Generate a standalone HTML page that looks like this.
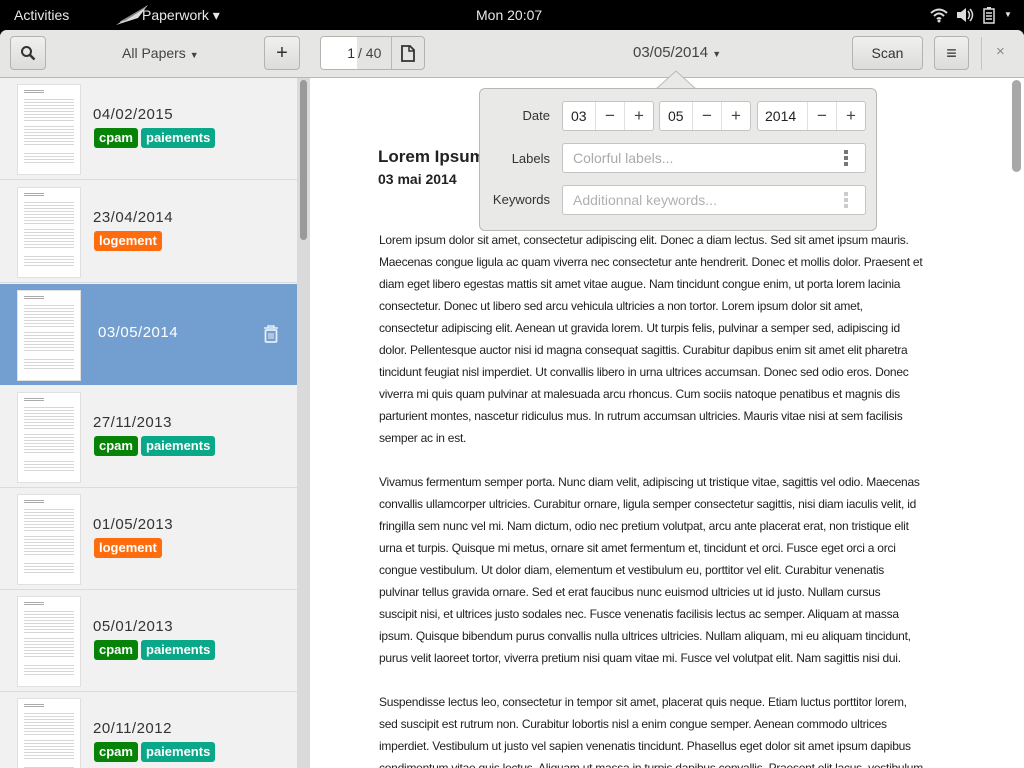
<!DOCTYPE html>
<html><head><meta charset="utf-8">
<style>
*{box-sizing:border-box;margin:0;padding:0}
body{width:1024px;height:768px;overflow:hidden;background:#000;font-family:"Liberation Sans",sans-serif;position:relative}
.abs{position:absolute}
#top{left:0;top:0;width:1024px;height:30px;background:#000;color:#e8e8e8;font-size:14px}
#win{left:0;top:30px;width:1024px;height:738px;background:#fff;border-radius:7px 7px 0 0;overflow:hidden}
#hdr{left:0;top:0;width:1024px;height:48px;background:#e6e6e5;border-bottom:1px solid #b8b8b5}
.btn{position:absolute;height:34px;border:1px solid #b3b3b0;border-radius:4px;background:linear-gradient(#f0f0ef,#dcdcda);color:#333;font-size:14px;text-align:center;line-height:32px}
#side{left:0;top:48px;width:310px;height:690px;background:#f1f1f1;border-right:1px solid #ccc}
.item{position:absolute;left:0;width:297px;height:102px;border-bottom:1px solid #dcdcdc}
.thumb{position:absolute;left:17px;top:6px;width:64px;height:91px;background:#fff;border:1px solid #e0e0e0;overflow:hidden}
.thumb:before{content:"";position:absolute;left:6px;top:5px;width:20px;height:4px;background:repeating-linear-gradient(#aaa 0 1px,transparent 1px 2px)}
.thumb:after{content:"";position:absolute;left:6px;right:6px;top:14px;height:64px;background:linear-gradient(transparent 0 22px,#fff 22px 26px,transparent 26px 48px,#fff 48px 52px,transparent 52px),repeating-linear-gradient(#d6d6d6 0 1px,transparent 1px 3px)}
.date{position:absolute;left:93px;top:28px;font-size:15px;color:#333;letter-spacing:.5px}
.tag{position:absolute;top:50px;height:20px;border-radius:3px;color:#fff;font-size:13px;font-weight:bold;line-height:20px;padding:0 5px}
.g{background:#078407}.t{background:#08a888}.o{background:#ff6c0d}
.p{font-size:12px;line-height:22px;color:#222;white-space:nowrap;letter-spacing:-0.25px}
#pop{left:479px;top:58px;width:398px;height:143px;background:#e9e9e8;border:1px solid #b8b8b5;border-radius:6px}
.lab{position:absolute;font-size:13px;color:#333;text-align:right;width:70px}
.spin{position:absolute;top:12px;height:30px;background:#fff;border:1px solid #c4c4c0;border-radius:3px;font-size:14px;color:#222}
.spin span{position:absolute;top:0;height:28px;line-height:28px;text-align:center;border-left:1px solid #e0e0e0;width:29px;font-size:17px;color:#444}
.entry{position:absolute;left:82px;width:304px;height:30px;background:#fff;border:1px solid #c4c4c0;border-radius:3px;font-size:14px;color:#aaa;line-height:28px;padding-left:10px}
.dots{position:absolute;right:17px;top:6px;width:4px}
.dots b{display:block;width:4px;height:4px;background:#777;margin-bottom:2px}
</style></head><body>
<div id="top" class="abs">
 <div class="abs" style="left:14px;top:7px">Activities</div>
 <svg class="abs" style="left:114px;top:4px" width="36" height="22"><path d="M2 21 L34 1 L24 14 Z" fill="#ddd"/><path d="M6 18 L30 4 M10 17 L32 3" stroke="#888" stroke-width="1"/></svg>
 <div class="abs" style="left:142px;top:7px">Paperwork ▾</div>
 <div class="abs" style="left:476px;top:7px">Mon 20:07</div>
 <svg class="abs" style="left:930px;top:7px" width="18" height="16"><path d="M1 6 Q9 -1 17 6 M4 9 Q9 4 14 9 M7 12 Q9 10 11 12" stroke="#ddd" stroke-width="2" fill="none"/><circle cx="9" cy="14" r="1.5" fill="#ddd"/></svg>
 <svg class="abs" style="left:956px;top:7px" width="18" height="16"><path d="M1 5h4l5-4v14l-5-4H1z" fill="#ddd"/><path d="M12 4q3 4 0 8M14 2q5 6 0 12" stroke="#ddd" stroke-width="1.5" fill="none"/></svg>
 <svg class="abs" style="left:983px;top:6px" width="12" height="18"><rect x="1" y="3" width="10" height="14" stroke="#ddd" stroke-width="1.5" fill="none"/><rect x="4" y="1" width="4" height="2" fill="#ddd"/><path d="M3 7h6M3 10h6M3 13h6" stroke="#ddd" stroke-width="1.5"/></svg>
 <div class="abs" style="left:1004px;top:10px;font-size:8px">▼</div>
</div>
<div id="win" class="abs">
 <div id="hdr" class="abs">
  <div class="btn" style="left:10px;top:6px;width:36px"><svg width="16" height="16" style="margin-top:8px"><circle cx="6.5" cy="6.5" r="4.5" stroke="#333" stroke-width="2" fill="none"/><path d="M10 10l4.5 4.5" stroke="#333" stroke-width="2.5"/></svg></div>
  <div class="abs" style="left:122px;top:15px;font-size:14px;color:#444">All Papers <span style="font-size:9px">▼</span></div>
  <div class="btn" style="left:264px;top:6px;width:36px;font-size:20px">+</div>
  <div class="btn" style="left:320px;top:6px;width:105px;background:#e4e4e2"></div>
  <div class="abs" style="left:321px;top:7px;width:36px;height:32px;background:#fff;border-radius:3px 0 0 3px;text-align:right;padding-right:2px;line-height:32px;font-size:14px;color:#333">1</div>
  <div class="abs" style="left:358px;top:15px;font-size:14px;color:#444">/ 40</div>
  <div class="abs" style="left:391px;top:7px;width:1px;height:32px;background:#b8b8b5"></div>
  <svg class="abs" style="left:401px;top:15px" width="14" height="17"><path d="M1 1h8l4 4v11H1z" stroke="#333" stroke-width="1.8" fill="none"/><path d="M8 1v5h5" stroke="#333" stroke-width="1.5" fill="none"/></svg>
  <div class="abs" style="left:633px;top:14px;font-size:15px;color:#444">03/05/2014 <span style="font-size:9px">▼</span></div>
  <div class="btn" style="left:852px;top:6px;width:71px">Scan</div>
  <div class="btn" style="left:934px;top:6px;width:35px;font-size:18px;font-weight:bold">≡</div>
  <div class="abs" style="left:981px;top:7px;width:1px;height:33px;background:#c4c4c0"></div>
  <div class="abs" style="left:996px;top:13px;font-size:15px;color:#888">×</div>
 </div>
 <div id="side" class="abs">
  <div class="abs" style="left:297px;top:0;width:13px;height:690px;background:#dadada"></div>
  <div class="abs" style="left:300px;top:2px;width:7px;height:160px;background:#9a9a9a;border-radius:4px"></div>
  <div class="item" style="top:0"><div class="thumb"></div><div class="date">04/02/2015</div><div class="tag g" style="left:94px">cpam</div><div class="tag t" style="left:141px">paiements</div></div>
  <div class="item" style="top:103px"><div class="thumb"></div><div class="date">23/04/2014</div><div class="tag o" style="left:94px">logement</div></div>
  <div class="item" style="top:206px;background:#729fcf;height:101px;border:none"><div class="thumb"></div><div class="date" style="color:#fff;left:98px;top:40px">03/05/2014</div>
   <svg class="abs" style="left:263px;top:41px" width="16" height="18"><path d="M1 3h14M5 3V1h6v2" stroke="#e8eef7" stroke-width="1.5" fill="none"/><rect x="2.5" y="5" width="11" height="12" rx="1" stroke="#e8eef7" stroke-width="1.8" fill="none"/><path d="M6 8v6M8 8v6M10 8v6" stroke="#e8eef7" stroke-width="1"/></svg></div>
  <div class="item" style="top:308px"><div class="thumb"></div><div class="date">27/11/2013</div><div class="tag g" style="left:94px">cpam</div><div class="tag t" style="left:141px">paiements</div></div>
  <div class="item" style="top:410px"><div class="thumb"></div><div class="date">01/05/2013</div><div class="tag o" style="left:94px">logement</div></div>
  <div class="item" style="top:512px"><div class="thumb"></div><div class="date">05/01/2013</div><div class="tag g" style="left:94px">cpam</div><div class="tag t" style="left:141px">paiements</div></div>
  <div class="item" style="top:614px"><div class="thumb"></div><div class="date">20/11/2012</div><div class="tag g" style="left:94px">cpam</div><div class="tag t" style="left:141px">paiements</div></div>
 </div>
 <div class="abs" style="left:1012px;top:50px;width:9px;height:92px;background:#a8a8a8;border-radius:5px"></div>
 <div class="abs" style="left:378px;top:117px;font-size:17px;font-weight:bold;color:#222">Lorem Ipsum</div>
 <div class="abs" style="left:378px;top:141px;font-size:14px;font-weight:bold;color:#222">03 mai 2014</div>
 <div class="abs p" style="left:379px;top:199px">
Lorem ipsum dolor sit amet, consectetur adipiscing elit. Donec a diam lectus. Sed sit amet ipsum mauris.<br>
Maecenas congue ligula ac quam viverra nec consectetur ante hendrerit. Donec et mollis dolor. Praesent et<br>
diam eget libero egestas mattis sit amet vitae augue. Nam tincidunt congue enim, ut porta lorem lacinia<br>
consectetur. Donec ut libero sed arcu vehicula ultricies a non tortor. Lorem ipsum dolor sit amet,<br>
consectetur adipiscing elit. Aenean ut gravida lorem. Ut turpis felis, pulvinar a semper sed, adipiscing id<br>
dolor. Pellentesque auctor nisi id magna consequat sagittis. Curabitur dapibus enim sit amet elit pharetra<br>
tincidunt feugiat nisl imperdiet. Ut convallis libero in urna ultrices accumsan. Donec sed odio eros. Donec<br>
viverra mi quis quam pulvinar at malesuada arcu rhoncus. Cum sociis natoque penatibus et magnis dis<br>
parturient montes, nascetur ridiculus mus. In rutrum accumsan ultricies. Mauris vitae nisi at sem facilisis<br>
semper ac in est.<br><br>
Vivamus fermentum semper porta. Nunc diam velit, adipiscing ut tristique vitae, sagittis vel odio. Maecenas<br>
convallis ullamcorper ultricies. Curabitur ornare, ligula semper consectetur sagittis, nisi diam iaculis velit, id<br>
fringilla sem nunc vel mi. Nam dictum, odio nec pretium volutpat, arcu ante placerat erat, non tristique elit<br>
urna et turpis. Quisque mi metus, ornare sit amet fermentum et, tincidunt et orci. Fusce eget orci a orci<br>
congue vestibulum. Ut dolor diam, elementum et vestibulum eu, porttitor vel elit. Curabitur venenatis<br>
pulvinar tellus gravida ornare. Sed et erat faucibus nunc euismod ultricies ut id justo. Nullam cursus<br>
suscipit nisi, et ultrices justo sodales nec. Fusce venenatis facilisis lectus ac semper. Aliquam at massa<br>
ipsum. Quisque bibendum purus convallis nulla ultrices ultricies. Nullam aliquam, mi eu aliquam tincidunt,<br>
purus velit laoreet tortor, viverra pretium nisi quam vitae mi. Fusce vel volutpat elit. Nam sagittis nisi dui.<br><br>
Suspendisse lectus leo, consectetur in tempor sit amet, placerat quis neque. Etiam luctus porttitor lorem,<br>
sed suscipit est rutrum non. Curabitur lobortis nisl a enim congue semper. Aenean commodo ultrices<br>
imperdiet. Vestibulum ut justo vel sapien venenatis tincidunt. Phasellus eget dolor sit amet ipsum dapibus<br>
condimentum vitae quis lectus. Aliquam ut massa in turpis dapibus convallis. Praesent elit lacus, vestibulum
 </div>
 <svg class="abs" style="left:656px;top:40px" width="40" height="20"><path d="M0 19 L20 1 L40 19" fill="#e9e9e8" stroke="#b8b8b5"/></svg>
 <div id="pop" class="abs">
  <div class="abs" style="left:0;top:0;width:396px;height:20px;background:#e9e9e8;border-radius:6px"></div>
  <div class="lab" style="left:0;top:19px">Date</div>
  <div class="spin" style="left:82px;width:92px"><div class="abs" style="left:8px;top:6px">03</div><span style="left:32px">−</span><span style="left:61px">+</span></div>
  <div class="spin" style="left:179px;width:92px"><div class="abs" style="left:8px;top:6px">05</div><span style="left:32px">−</span><span style="left:61px">+</span></div>
  <div class="spin" style="left:277px;width:109px"><div class="abs" style="left:7px;top:6px">2014</div><span style="left:49px">−</span><span style="left:78px">+</span></div>
  <div class="lab" style="left:0;top:62px">Labels</div>
  <div class="entry" style="top:54px">Colorful labels...<div class="dots"><b></b><b></b><b></b></div></div>
  <div class="lab" style="left:0;top:103px">Keywords</div>
  <div class="entry" style="top:96px;color:#b0b0b0">Additionnal keywords...<div class="dots"><b style="background:#ccc"></b><b style="background:#ccc"></b><b style="background:#ccc"></b></div></div>
 </div>
</div>
</body></html>
